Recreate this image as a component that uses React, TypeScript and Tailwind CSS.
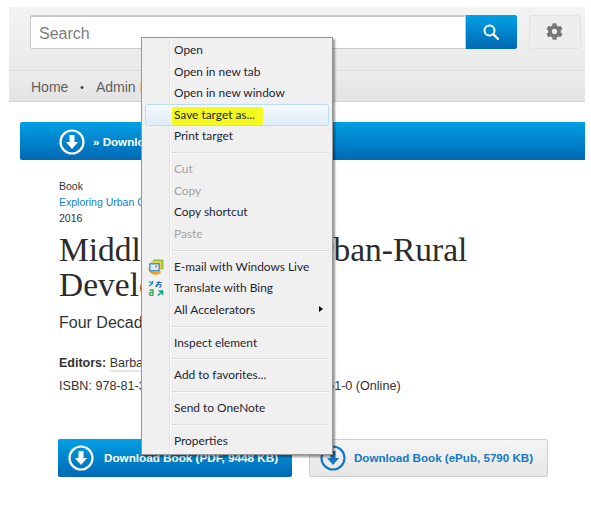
import React from 'react';
import { FaCog } from 'react-icons/fa';

const sans = { fontFamily: '"Liberation Sans", Arial, sans-serif' };

// Circled download arrow used on the banner and both buttons
function DownloadIcon({ className }: { className: string }) {
  return (
    <svg viewBox="0 0 26 26" className={className} fill="none">
      <circle cx="13" cy="13" r="11.500" stroke="currentColor" strokeWidth="2.200" />
      <path d="M10.500 6h5v7h3.600L13 20l-6.100-7h3.600z" fill="currentColor" />
    </svg>
  );
}

function LiveIcon() {
  return (
    <svg viewBox="0 0 16 16" className="w-4 h-4">
      <rect x="5" y="0.500" width="10.500" height="10" rx="1" fill="#8cc63f" />
      <rect x="3" y="2" width="10.500" height="9" rx="1" fill="#f7c948" />
      <path d="M0.500 9a7 6.500 0 0 0 13 3.500H5z" fill="#f39c1f" />
      <rect x="1" y="4" width="11" height="8.500" rx="1" fill="#3d9bdc" />
      <rect x="2.500" y="5.500" width="8" height="5.500" fill="#d5ecfa" />
      <circle cx="8" cy="7.500" r="1" fill="#e8565a" />
    </svg>
  );
}

function TranslateIcon() {
  return (
    <svg viewBox="0 0 16 16" className="w-4 h-4" fill="none">
      <path d="M1 1.500l3.500 2M1 6l3.500-2.500V1" stroke="#1f8fc4" strokeWidth="1.400" />
      <path d="M8.500 2.500h5M11 1c-.5 3-1.500 5-2.500 5.500-1 .4-1-1.500 1-2 2-.5 4 0 3.500 1.500-.3 1-1.500 1.300-2 1.300" stroke="#1f6fb0" strokeWidth="1.100" />
      <path d="M1.500 10h3.500v5.500M5 12.500H3a1.500 1.500 0 0 0 0 3h2" stroke="#3aa655" strokeWidth="1.400" />
      <path d="M10 15.500l4-4M10.500 11h4v4" stroke="#17a08f" strokeWidth="1.600" />
    </svg>
  );
}

function Item({ label, muted, icon, arrow, highlight }: { label: string; muted?: boolean; icon?: React.ReactNode; arrow?: boolean; highlight?: boolean }) {
  return (
    <div className={`relative h-[21.500px] flex items-center pl-[32px] text-[11.900px] ${muted ? 'text-[#a3a3a3]' : 'text-[#1c2430]'}`}>
      {highlight && (
        <div className="absolute left-[3px] right-[3px] top-0 bottom-0 rounded-[3px] border border-[#bcdcf4] bg-gradient-to-b from-[#f4f9fd] to-[#dfecf8]" />
      )}
      {highlight && <div className="absolute left-[30px] top-[3px] h-[18px] w-[91px] rounded-[2px] bg-[#f4f91e]" />}
      {icon && <div className="absolute left-[6px] top-[3px]">{icon}</div>}
      <span className="relative">{label}</span>
      {arrow && <div className="absolute right-[9px] top-[7px] border-y-[3.500px] border-l-[4px] border-y-transparent border-l-black" />}
    </div>
  );
}

function Sep() {
  return (
    <div className="h-[11.400px] flex items-center pl-[29px] pr-[3px]">
      <div className="h-[1px] w-full bg-[#dcdcdc] shadow-[0_1px_0_#fafafa]" />
    </div>
  );
}

function ContextMenu() {
  return (
    <div
      className="absolute left-[141px] top-[37px] w-[192px] h-[418px] pt-[1.600px] bg-[#f0f0f0] border border-[#979797] shadow-[2px_2px_2px_rgba(0,0,0,0.4)]"
      style={{ fontFamily: 'Lato, "Noto Sans", sans-serif' }}
    >
      <div className="absolute left-[27px] top-0 bottom-0 w-[1px] bg-[#e2e2e2] shadow-[1px_0_0_#fafafa]" />
      <Item label="Open" />
      <Item label="Open in new tab" />
      <Item label="Open in new window" />
      <Item label="Save target as..." highlight />
      <Item label="Print target" />
      <Sep />
      <Item label="Cut" muted />
      <Item label="Copy" muted />
      <Item label="Copy shortcut" />
      <Item label="Paste" muted />
      <Sep />
      <Item label="E-mail with Windows Live" icon={<LiveIcon />} />
      <Item label="Translate with Bing" icon={<TranslateIcon />} />
      <Item label="All Accelerators" arrow />
      <Sep />
      <Item label="Inspect element" />
      <Sep />
      <Item label="Add to favorites..." />
      <Sep />
      <Item label="Send to OneNote" />
      <Sep />
      <Item label="Properties" />
    </div>
  );
}

export default function App() {
  return (
    <div className="relative w-[591px] h-[505px] overflow-hidden bg-white pt-[7px]" style={sans}>
      {/* Header */}
      <div className="ml-[9px] w-[576px]">
        <div className="h-[64px] pt-[8px] pl-[21px] pr-[4px] flex bg-gradient-to-b from-[#f3f3f3] to-[#eaeaea] border-b border-[#dddddd]">
          <div className="w-[436px] h-[34px] bg-white rounded-l-[2px] border border-[#c9c9c9] border-t-2 pl-[8px] pt-[2px] flex items-center text-[16px] text-[#7d7d7d]">
            Search
          </div>
          <div className="w-[51px] h-[34px] rounded-r-[2px] bg-gradient-to-b from-[#00a0e4] to-[#0069b4] flex items-center justify-center pr-[1px] text-white">
            <svg viewBox="0 0 16 16" className="w-[16px] h-[16px]" fill="none" stroke="currentColor">
              <circle cx="6.500" cy="6.500" r="5" strokeWidth="2" />
              <path d="M10.500 10.500L15 15" strokeWidth="2.400" strokeLinecap="round" />
            </svg>
          </div>
          <div className="ml-[12px] w-[52px] h-[34px] rounded-[2px] border border-[#e2e2e2] bg-[#eeeeee] pb-[2px] pr-[2px] flex items-center justify-center text-[#777777]">
            <FaCog className="w-[17px] h-[17px]" />
          </div>
        </div>
        <div className="h-[31px] pl-[22px] pt-[2px] flex items-center gap-[12px] text-[14px] text-[#5f5f5f] bg-gradient-to-b from-[#ececec] to-[#e3e3e3] border-b border-[#d4d4d4]">
          <span>Home</span>
          <span className="text-[10px] text-[#333333]">•</span>
          <span>Admin Interface</span>
        </div>
      </div>

      {/* Banner */}
      <div className="mt-[20px] ml-[20px] w-[565px] h-[38px] rounded-l-[2px] pl-[39px] pt-[1px] flex items-center gap-[8px] text-white text-[11.600px] font-bold bg-gradient-to-b from-[#00a0e4] to-[#0069b4]">
        <DownloadIcon className="w-[26px] h-[26px]" />
        <span className="pt-[1px]">» Download Book</span>
      </div>

      {/* Book details */}
      <div className="mt-[18px] ml-[59px] w-[500px]">
        <div className="text-[10.500px] leading-[16px] text-[#333333]">Book</div>
        <div className="text-[10.500px] leading-[16px] text-[#0f7fd0]">Exploring Urban Change in South Asia</div>
        <div className="text-[10.500px] leading-[16px] text-[#333333]">2016</div>
        <h1 className="mt-[6px] text-[33.500px] leading-[35px] font-normal text-[#2b2b2b] whitespace-nowrap" style={{ fontFamily: '"Liberation Serif", "Times New Roman", serif' }}>
          Middle India and Urban-Rural
          <br />
          Development
        </h1>
        <div className="mt-[11px] text-[16px] leading-[20px] text-[#333333]">Four Decades of Change</div>
        <div className="mt-[22px] text-[12.500px] leading-[16px] text-[#333333]">
          <b>Editors:</b> <span className="border-b-2 border-[#e6e6e6]">Barbara Harriss-White</span>
        </div>
        <div className="mt-[7px] text-[12.600px] leading-[16px] text-[#333333] whitespace-nowrap">
          ISBN: 978-81-322-3761-0 (Print) 978-81-322-3761-0 (Online)
        </div>
      </div>

      {/* Download buttons */}
      <div className="mt-[45px] ml-[58px] flex gap-[17px]">
        <div className="w-[234px] h-[38px] rounded-[2px] pl-[10px] flex items-center gap-[10px] text-white text-[11.700px] font-bold bg-gradient-to-b from-[#00a0e4] to-[#0069b4]">
          <DownloadIcon className="w-[26px] h-[26px]" />
          <span>Download Book (PDF, 9448 KB)</span>
        </div>
        <div className="w-[239px] h-[38px] rounded-[2px] pl-[10px] flex items-center gap-[8px] text-[#1578c4] text-[11.600px] font-bold border border-[#cfcfcf] bg-gradient-to-b from-[#f5f5f5] to-[#e6e6e6]">
          <DownloadIcon className="w-[26px] h-[26px]" />
          <span>Download Book (ePub, 5790 KB)</span>
        </div>
      </div>

      <ContextMenu />
    </div>
  );
}
